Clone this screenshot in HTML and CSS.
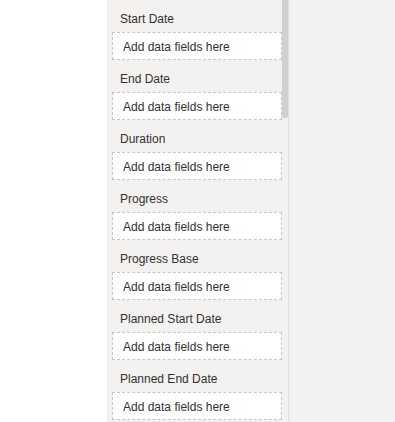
FILE: index.html
```html
<!DOCTYPE html>
<html lang="en">
<head>
    <meta charset="UTF-8">
    <meta name="viewport" content="width=device-width, initial-scale=1.0">
    <title>Field wells</title>
    <link rel="stylesheet" href="styles.css">
</head>
<body>
    <div class="page">
        <div class="canvas"></div>
        <div class="pane">
            <div class="wells">
                <div class="well">
                    <div class="well-label">Start Date</div>
                    <div class="drop">Add data fields here</div>
                </div>
                <div class="well">
                    <div class="well-label">End Date</div>
                    <div class="drop">Add data fields here</div>
                </div>
                <div class="well">
                    <div class="well-label">Duration</div>
                    <div class="drop">Add data fields here</div>
                </div>
                <div class="well">
                    <div class="well-label">Progress</div>
                    <div class="drop">Add data fields here</div>
                </div>
                <div class="well">
                    <div class="well-label">Progress Base</div>
                    <div class="drop">Add data fields here</div>
                </div>
                <div class="well">
                    <div class="well-label">Planned Start Date</div>
                    <div class="drop">Add data fields here</div>
                </div>
                <div class="well">
                    <div class="well-label">Planned End Date</div>
                    <div class="drop">Add data fields here</div>
                </div>
            </div>
            <div class="track">
                <div class="thumb"></div>
            </div>
        </div>
        <div class="side"></div>
    </div>
</body>
</html>
```

FILE: styles.css
```css
html, body {
    margin: 0;
    padding: 0;
    height: 100%;
}
body {
    font-family: "Liberation Sans", Arial, sans-serif;
    font-size: 12px;
    color: #323130;
    background: #ffffff;
    overflow: hidden;
}
.page {
    display: flex;
    height: 422px;
}
.canvas {
    width: 107px;
    background: #ffffff;
}
.pane {
    display: flex;
    width: 181px;
    background: #f3f2f1;
    border-right: 1px solid #e1dfdd;
    overflow: hidden;
}
.wells {
    width: 170px;
    padding-left: 5px;
}
.well-label {
    line-height: 16px;
    padding: 11px 0 5px 8px;
}
.drop {
    box-sizing: border-box;
    height: 28px;
    line-height: 26px;
    padding: 1px 0 0 10px;
    background: #ffffff;
    border: 1px dashed #c8c6c4;
    white-space: nowrap;
}
.track {
    width: 6px;
}
.thumb {
    height: 118px;
    background: #d2d0ce;
    border-radius: 0 0 2px 2px;
}
.side {
    flex: 1;
    background: #f3f2f1;
}
```
